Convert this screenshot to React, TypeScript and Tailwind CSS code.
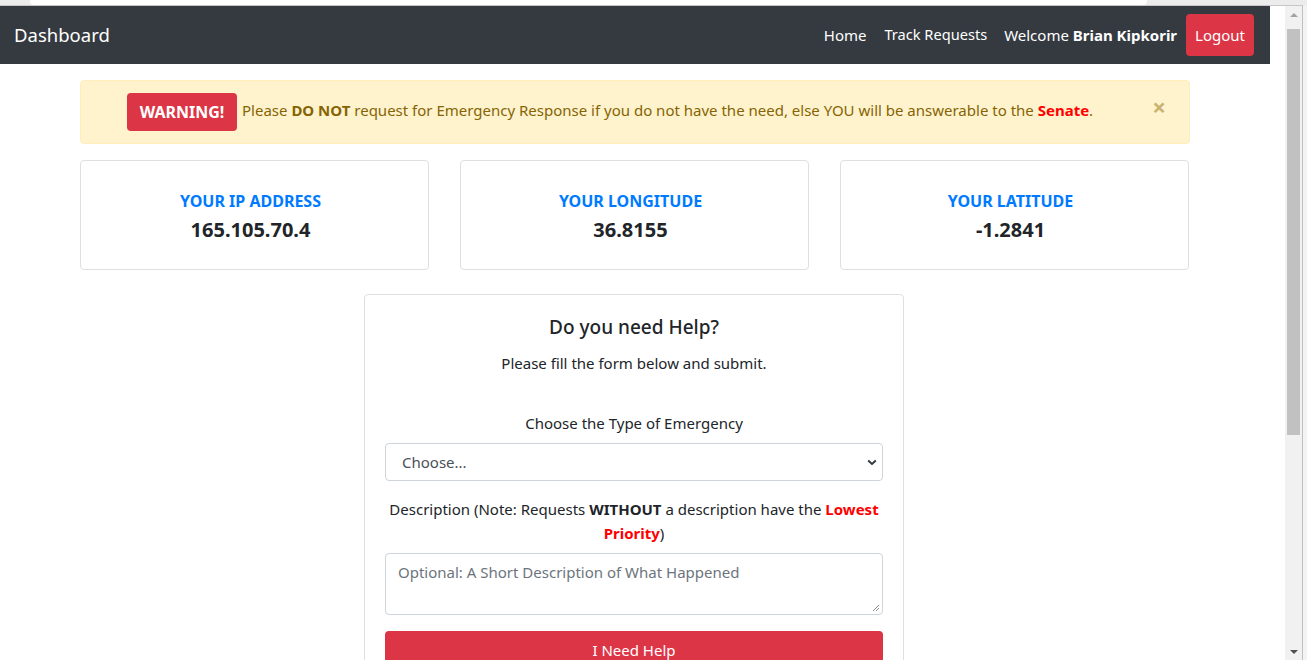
const FONT = "font-['Noto_Sans',sans-serif]";

function InfoCard({ label, value }: { label: string; value: string }) {
  return (
    <div className="flex h-[110px] flex-1 flex-col items-center justify-center rounded border border-[#dfdfdf] pr-[8px] pt-[2px]">
      <div className="text-[16px] font-bold leading-[24px] text-[#007bff]">{label}</div>
      <div className="mt-[4px] text-[20px] font-bold leading-[26px] text-[#212529]">{value}</div>
    </div>
  );
}

function Scrollbar() {
  return (
    <div className="flex w-[17px] flex-col bg-[#f1f1f1]">
      <div className="flex h-[17px] items-center justify-center">
        <div className="h-0 w-0 border-x-[4px] border-b-[4px] border-x-transparent border-b-[#a3a3a3]" />
      </div>
      <div className="mx-[2px] mt-[6px] h-[406px] bg-[#c1c1c1]" />
      <div className="flex-1" />
      <div className="flex h-[17px] items-center justify-center">
        <div className="h-0 w-0 border-x-[4px] border-t-[4px] border-x-transparent border-t-[#505050]" />
      </div>
    </div>
  );
}

export default function App() {
  return (
    <div className={`flex h-[660px] w-[1307px] flex-col overflow-hidden bg-white ${FONT} text-[#212529]`}>
      {/* browser chrome strip */}
      <div className="flex h-[6px] bg-[#ececec]">
        <div className="ml-[30px] h-[5px] w-[1117px] rounded-b-[4px] bg-white" />
        <div className="flex-1" />
      </div>
      <div className="h-px w-[1303px] bg-[#c6c6c6] -mt-px" />

      <div className="flex min-h-0 flex-1">
        <div className="w-[1285px]">
          <div className="w-[1270px]">
            {/* navbar */}
            <nav className="flex h-[58px] items-center justify-between bg-[#343a40] pl-[14px] pr-[16px]">
              <span className="text-[18.5px] leading-[30px] text-white">Dashboard</span>
              <div className="flex items-center text-[15px] text-white">
                <a className="mr-[18px]">Home</a>
                <a className="mr-[17px] text-[14.6px]">Track Requests</a>
                <span className="mr-[9px]">
                  Welcome <b className="font-bold">Brian Kipkorir</b>
                </span>
                <button className="h-[42px] rounded-[4px] bg-[#dc3545] px-[9px] pt-px text-[15px] text-white">
                  Logout
                </button>
              </div>
            </nav>

            <div className="mx-auto w-[1110px] pt-[16px]">
              {/* warning alert */}
              <div className="relative flex h-[64px] items-center rounded border border-[#ffeeba] bg-[#fff3cd] pl-[46px] text-[15px] text-[#856404]">
                <span className="flex h-[38px] w-[110px] items-center justify-center rounded-[4px] bg-[#dc3545] text-[16px] font-bold text-white">
                  WARNING!
                </span>
                <span className="ml-[5px] -mt-[4px]">
                  Please <b>DO NOT</b> request for Emergency Response if you do not have the need, else YOU will be
                  answerable to the <b className="text-[#ff0000]">Senate</b>.
                </span>
                <span className="absolute right-[23px] top-[8px] text-[24px] font-bold leading-[36px] text-[#c9b272]">
                  ×
                </span>
              </div>

              {/* info cards */}
              <div className="mt-[16px] flex gap-[31px] pr-px">
                <InfoCard label="YOUR IP ADDRESS" value="165.105.70.4" />
                <InfoCard label="YOUR LONGITUDE" value="36.8155" />
                <InfoCard label="YOUR LATITUDE" value="-1.2841" />
              </div>

              {/* help form */}
              <div className="ml-[284px] mt-[24px] w-[540px] rounded border border-[#dfdfdf] px-[20px] pt-[20px] pb-[20px]">
                <h2 className="text-center text-[19px] font-medium leading-[24px]">Do you need Help?</h2>
                <p className="mt-[12px] text-center text-[15px] leading-[24px]">Please fill the form below and submit.</p>

                <label className="mt-[36px] block text-center text-[15px] leading-[24px]">
                  Choose the Type of Emergency
                </label>
                <div className="mt-[8px] flex h-[38px] items-center justify-between rounded border border-[#ced4da] pl-[16px] pr-[5px] text-[15px] text-[#495057]">
                  <span>Choose...</span>
                  <svg width="10" height="7" viewBox="0 0 10 7" className="mt-px">
                    <path d="M1.2 1.5 L5 5 L8.8 1.5" fill="none" stroke="#343a40" strokeWidth="2" />
                  </svg>
                </div>

                <p className="mt-[16px] text-center text-[15px] leading-[24px]">
                  Description (Note: Requests <b>WITHOUT</b> a description have the{" "}
                  <b className="text-[#ff0000]">Lowest Priority</b>)
                </p>
                <div className="relative mt-[8px] h-[62px] rounded border border-[#ced4da] px-[12px] pt-[6px] text-[15px] leading-[24px] text-[#6c757d]">
                  Optional: A Short Description of What Happened
                  <svg className="absolute bottom-[2px] right-[2px]" width="8" height="8" viewBox="0 0 8 8">
                    <path d="M7 1 L1 7 M7 4 L4 7" stroke="#888" strokeWidth="1" />
                  </svg>
                </div>

                <button className="mt-[16px] h-[38px] w-full rounded bg-[#dc3545] text-[15px] text-white">I Need Help</button>
              </div>
            </div>
          </div>
        </div>
        <Scrollbar />
        <div className="w-px bg-[#c0c0c0]" />
        <div className="flex-1 bg-[#f3f3f3]" />
      </div>
    </div>
  );
}
